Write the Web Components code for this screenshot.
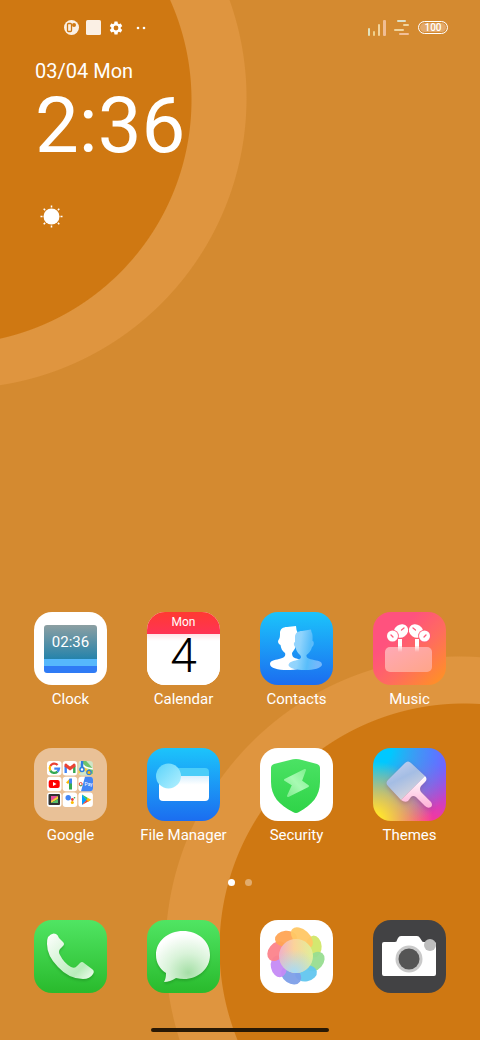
<!DOCTYPE html>
<html lang="en">
<head>
<meta charset="utf-8">
<meta name="viewport" content="width=device-width, initial-scale=1">
<title>Home</title>
<style>
  html, body {
    margin: 0;
    min-height: 100%;
  }
  body {
    font-family: Roboto, "Noto Sans", sans-serif;
    color: #fff;
  }
</style>
</head>
<body>

<phone-home>
  <status-bar slot="status"></status-bar>
  <clock-widget slot="widget" date="03/04 Mon" time="2:36"></clock-widget>

  <app-tile label="Clock"><clock-face time="02:36"></clock-face></app-tile>
  <app-tile label="Calendar"><calendar-face weekday="Mon" day="4"></calendar-face></app-tile>

  <app-tile label="Contacts" style="--tile: linear-gradient(#1cc4fb, #1b6df0)">
    <svg viewBox="0 0 73 73">
      <defs>
        <linearGradient id="person" x1="0" y1="0" x2="1" y2="0.2">
          <stop offset="0" stop-color="#9fd6fd"/>
          <stop offset="0.4" stop-color="#8fd3fc"/>
          <stop offset="0.7" stop-color="#58bdfa"/>
          <stop offset="1" stop-color="#74b8fb"/>
        </linearGradient>
      </defs>
      <path fill="#fff" d="M20 21C20 17 23 15 27 15L36 14L36.500 18C38 20 37.500 24 37.500 27C39 28 38 32 36 33C35.500 37 33 39 32 41C32 45 34 46 38 47C44 49 46 50 46 52C45 56 36 58 27 58C18 58 10 56 10 52C10 49 14 48 19 47C24 46 26 44 25 41C22 39 21 36 20.500 33C18 32 17.500 29 18.500 28C20 26 20 24 20 21Z"/>
      <path fill="url(#person)" d="M35 25C35 21 38 19 42 19L51 17.500L51.500 20C53 22 52.500 26 52.500 29C54.500 29 54 34 52 35C51 39 49 41 46.500 43C46 46 49 47 54 48C60 49 62 50 62 53C61 56 54 58 45 58C36 58 28.500 56 28.500 53C29 50 33 49 37 48C41 47 42 45 40 43C37 40 36 38 35.500 35C33.500 34 33.500 30 35 30Z"/>
    </svg>
  </app-tile>

  <app-tile label="Music" style="--tile: linear-gradient(135deg, #ff527e 30%, #ff6c5e 60%, #ff961d)">
    <svg viewBox="0 0 73 73">
      <defs>
        <linearGradient id="case" x1="0" y1="0" x2="1" y2="1">
          <stop offset="0" stop-color="#ffa9b7"/>
          <stop offset="1" stop-color="#ffa588"/>
        </linearGradient>
        <linearGradient id="stem" x1="0" y1="0" x2="0" y2="1">
          <stop offset="0.5" stop-color="#fff"/>
          <stop offset="1" stop-color="#fff" stop-opacity="0"/>
        </linearGradient>
      </defs>
      <rect x="12" y="35" width="47" height="25" rx="5" fill="url(#case)"/>
      <g id="bud">
        <path fill="url(#stem)" d="M25 27h4v13h-4z"/>
        <ellipse cx="28" cy="19" rx="7.500" ry="6.500" transform="rotate(-35 28 19)" fill="#fff"/>
        <circle cx="19.500" cy="24" r="6.300" fill="#ff5a7a"/>
        <circle cx="19.500" cy="24" r="5.500" fill="#fff"/>
        <path stroke="#ff5a7a" stroke-width="1.300" stroke-linecap="round" d="M28.500 18l2.500-2M18 23l2 2"/>
      </g>
      <use href="#bud" transform="matrix(-1 0 0 1 71 0)"/>
    </svg>
  </app-tile>

  <app-tile label="Google" style="--tile: #e9c197">
    <svg viewBox="0 0 73 73">
      <g fill="#fff">
        <rect x="13" y="13" width="14.500" height="14.500" rx="3"/>
        <rect x="28.700" y="13" width="14.500" height="14.500" rx="3"/>
        <rect x="44.400" y="13" width="14.500" height="14.500" rx="3" fill="#cfe5c8"/>
        <rect x="13" y="28.700" width="14.500" height="14.500" rx="3"/>
        <rect x="28.700" y="28.700" width="14.500" height="14.500" rx="3"/>
        <rect x="44.400" y="28.700" width="14.500" height="14.500" rx="3"/>
        <rect x="13" y="44.400" width="14.500" height="14.500" rx="3"/>
        <rect x="28.700" y="44.400" width="14.500" height="14.500" rx="3"/>
        <rect x="44.400" y="44.400" width="14.500" height="14.500" rx="3"/>
      </g>
      <g fill="none" stroke-width="2.300">
        <path stroke="#ea4335" d="M16.300 18A4.600 4.600 0 0 1 23.600 17"/>
        <path stroke="#fbbc04" d="M16.300 22.600A4.600 4.600 0 0 1 16.300 18"/>
        <path stroke="#34a853" d="M23.500 23.600A4.600 4.600 0 0 1 16.300 22.600"/>
        <path stroke="#4285f4" d="M20.300 20.600H25A4.800 4.800 0 0 1 23.400 23.700"/>
      </g>
      <path fill="#4285f4" d="M30.500 17.500l2.400 1.500v6h-2.400z"/>
      <path fill="#34a853" d="M41.500 17.500l-2.400 1.500v6h2.400z"/>
      <path fill="#ea4335" d="M30.500 16.500c1-1.500 2-1 2.800 0l2.700 2 2.700-2c.8-1 1.800-1.500 2.800 0v2l-5.500 4-5.500-4z"/>
      <clipPath id="map"><rect x="44.400" y="13" width="14.500" height="14.500" rx="3"/></clipPath>
      <g clip-path="url(#map)" fill="none">
        <path stroke="#6fc36b" stroke-width="4" d="M49 12c3 5 8 7 10 14"/>
        <path stroke="#f6cf45" stroke-width="3" d="M43 25l7-5 10 10"/>
        <path stroke="#fff" stroke-width="1.500" d="M46 13c2 6 7 7 13 8"/>
        <path stroke="#2d7de0" stroke-width="2.500" d="M48 13v7"/>
        <circle cx="48" cy="21.500" r="2" fill="#fff" stroke="#2d7de0" stroke-width="1.500"/>
        <circle cx="55" cy="24.500" r="2.200" fill="#fbbc04" stroke="#2d7de0" stroke-width="1.200"/>
      </g>
      <rect x="14.700" y="32" width="11" height="8" rx="2" fill="#f00"/>
      <path fill="#fff" d="M19 34l3.500 2-3.500 2z"/>
      <path fill="#fbbc04" d="M32 34.500l4-4 1.500 2-3.500 3.500z"/>
      <path fill="#4285f4" d="M35 31.500q0-1 1-1h2v6h-3z"/>
      <path fill="#34a853" d="M35 35.500h3v6h-3z"/>
      <path fill="#4285f4" d="M51 28.700h5a3 3 0 0 1 3 3v8.500a3 3 0 0 1-3 3h-9z"/>
      <circle cx="46.700" cy="36" r="1.500" fill="none" stroke="#ea4335"/>
      <path fill="none" stroke="#34a853" d="M45.400 37a1.500 1.500 0 0 0 2.800 0"/>
      <text x="50.500" y="38" font-size="5" fill="#fff">Pay</text>
      <rect x="14.500" y="46" width="11.500" height="11" rx="1" fill="#333"/>
      <path fill="#e94e9c" d="M17 48l7 0-7 6z"/>
      <path fill="#f4d13d" d="M24 48v3l-7 4v-2z"/>
      <path fill="#58bf6c" d="M24 51v4h-7z"/>
      <circle cx="34.200" cy="49.700" r="2.700" fill="#4285f4"/>
      <circle cx="38.400" cy="51.500" r="1.400" fill="#ea4335"/>
      <circle cx="38.300" cy="54.600" r="1.500" fill="#fbbc04"/>
      <circle cx="40.500" cy="49.700" r=".8" fill="#34a853"/>
      <path fill="#00a0ff" d="M48 46.500v10.500l5-5.300z"/>
      <path fill="#ea4335" d="M48 57l8-4.500-2.700-1.500z"/>
      <path fill="#34c759" d="M48 46.500l6 3.600-1.300 1.900z"/>
      <path fill="#fbbc04" d="M54 50l3.500 1.800-3.500 2-1.500-2z"/>
    </svg>
  </app-tile>

  <app-tile label="File Manager" style="--tile: linear-gradient(#1cc4fb, #1b6df0)">
    <svg viewBox="0 0 73 73">
      <defs>
        <linearGradient id="folder" x1="0" y1="0" x2="0" y2="1">
          <stop offset="0" stop-color="#d8f0fe"/>
          <stop offset="0.350" stop-color="#fff"/>
        </linearGradient>
        <linearGradient id="lens" x1="0" y1="0" x2="1" y2="1">
          <stop offset="0" stop-color="#5bd3fb"/>
          <stop offset="1" stop-color="#b4f0fe"/>
        </linearGradient>
      </defs>
      <path fill="#4bcdf8" d="M24 20h34a4 4 0 0 1 4 4v6H24z"/>
      <path fill="url(#folder)" d="M12 28h50v21a4 4 0 0 1-4 4H16a4 4 0 0 1-4-4z"/>
      <circle cx="21.500" cy="28" r="12.500" fill="url(#lens)"/>
    </svg>
  </app-tile>

  <app-tile label="Security">
    <svg viewBox="0 0 73 73">
      <defs>
        <linearGradient id="shield" x1="0" y1="0" x2="0" y2="1">
          <stop offset="0" stop-color="#4be264"/>
          <stop offset="1" stop-color="#2fd448"/>
        </linearGradient>
        <linearGradient id="bolt" x1="1" y1="0" x2="0" y2="1">
          <stop offset="0" stop-color="#7df08d"/>
          <stop offset="0.500" stop-color="#a8fab3"/>
          <stop offset="1" stop-color="#7beb8a"/>
        </linearGradient>
      </defs>
      <path fill="url(#shield)" d="M30 12Q36 10 42 12L57 16Q60 17 60 20V34C60 48 52 57 39 64Q36 66 33 64C19 57 11 48 11 34V20Q11 17 14 16Z"/>
      <path fill="url(#bolt)" stroke="url(#bolt)" stroke-width="2" stroke-linejoin="round" d="M45 22L25 32L33 37L28 48L48 38L41 33Z"/>
    </svg>
  </app-tile>

  <app-tile label="Themes" style="--tile: radial-gradient(circle at 0 100%, #ffe52e 8%, #ffe52e00 58%), radial-gradient(circle at 0 0, #00c8ff 18%, #00c8ff00 85%), radial-gradient(circle at 100% 5%, #8b4dff 15%, #8b4dff00 75%), #ff3694">
    <svg viewBox="0 0 73 73">
      <defs>
        <linearGradient id="bristle" x1="0" y1="0" x2="0.500" y2="1">
          <stop offset="0" stop-color="#c9d5f3"/>
          <stop offset="0.500" stop-color="#a4bde4"/>
          <stop offset="1" stop-color="#d8d5da"/>
        </linearGradient>
        <linearGradient id="handle" x1="0" y1="0" x2="0" y2="1">
          <stop offset="0" stop-color="#fff"/>
          <stop offset="1" stop-color="#ffb1d7"/>
        </linearGradient>
      </defs>
      <g style="filter: drop-shadow(0 2px 2px #a0307055)">
        <path fill="url(#bristle)" d="M15 32L32 15Q35 12 38 15L52 28L28 52L15 38Q12 35 15 32Z"/>
        <path fill="url(#handle)" d="M52 28Q55 31 52 34L48 38Q46 41 48 44L58 54Q60 57 58 59Q55 61 52 58L43 49Q40 47 38 49L35 53Q32 55 28 52Z"/>
      </g>
    </svg>
  </app-tile>

  <app-tile slot="dock" name="Phone" style="--tile: linear-gradient(#50e563, #29ba2c)">
    <svg viewBox="0 0 73 73">
      <defs>
        <linearGradient id="handset" x1="0" y1="0" x2="1" y2="1">
          <stop offset="0" stop-color="#fff"/>
          <stop offset="0.750" stop-color="#b9ecba"/>
          <stop offset="1" stop-color="#f4fff4"/>
        </linearGradient>
      </defs>
      <path style="filter: drop-shadow(0 2px 1px #18821b66)" fill="url(#handset)" d="M14 17Q18 12 22 14Q24 15 25 18L29 22Q31 24 29 26L26 29Q24 32 26 35Q30 43 37 47Q41 49 43 46L46 43Q48 41 50 43L58 49Q61 51 59 54Q56 59 49 59Q35 59 24 47Q13 36 13 24Q13 19 14 17Z"/>
    </svg>
  </app-tile>

  <app-tile slot="dock" name="Messages" style="--tile: linear-gradient(#50e563, #29ba2c)">
    <svg viewBox="0 0 73 73">
      <defs>
        <radialGradient id="bubble" cx="0.600" cy="0.820" r="0.850">
          <stop offset="0" stop-color="#a5dfa6"/>
          <stop offset="0.450" stop-color="#d9f3d9"/>
          <stop offset="0.900" stop-color="#fff"/>
        </radialGradient>
      </defs>
      <path style="filter: drop-shadow(0 2px 1px #18821b66)" fill="url(#bubble)" d="M36 11C51 11 63 21 63 35C63 49 51 59 37 59Q33 59 29 58Q23 62 17 62Q19 59 19 53C13 49 9 43 9 35C9 21 21 11 36 11Z"/>
    </svg>
  </app-tile>

  <app-tile slot="dock" name="Gallery">
    <svg viewBox="0 0 73 73">
      <defs>
        <radialGradient id="core-blue" cx="0.450" cy="1" r="0.700">
          <stop offset="0" stop-color="#a3dcfa"/>
          <stop offset="1" stop-color="#a3dcfa" stop-opacity="0"/>
        </radialGradient>
        <linearGradient id="core">
          <stop offset="0" stop-color="#efb0c9"/>
          <stop offset="0.450" stop-color="#fbd39a"/>
          <stop offset="1" stop-color="#dff09a"/>
        </linearGradient>
      </defs>
      <g fill-opacity="0.950">
        <ellipse cx="36" cy="16" rx="11" ry="8" fill="#d1e768" transform="rotate(62 36 36) rotate(25 36 16)"/>
        <ellipse cx="36" cy="16" rx="11" ry="8" fill="#98dd90" transform="rotate(106 36 36) rotate(25 36 16)"/>
        <ellipse cx="36" cy="16" rx="11" ry="8" fill="#62c6ef" transform="rotate(150 36 36) rotate(20 36 16)"/>
        <ellipse cx="36" cy="16" rx="11" ry="8" fill="#7d9fe8" transform="rotate(194 36 36) rotate(20 36 16)"/>
        <ellipse cx="36" cy="16" rx="11" ry="8" fill="#c58af6" transform="rotate(239 36 36) rotate(20 36 16)"/>
        <ellipse cx="36" cy="16" rx="11" ry="8" fill="#fc838b" transform="rotate(284 36 36) rotate(25 36 16)"/>
        <ellipse cx="36" cy="16" rx="11" ry="8" fill="#ffa454" transform="rotate(330 36 36) rotate(25 36 16)"/>
        <ellipse cx="36" cy="17" rx="13" ry="8" fill="#ffc765" transform="rotate(18 36 36) rotate(25 36 17)"/>
      </g>
      <circle cx="36" cy="36" r="17" fill="url(#core)"/>
      <circle cx="36" cy="36" r="17" fill="url(#core-blue)"/>
    </svg>
  </app-tile>

  <app-tile slot="dock" name="Camera" style="--tile: #424244">
    <svg viewBox="0 0 73 73">
      <path fill="#fff" d="M11 22H22Q24 22 24 20L25 18Q26 16 28 16H44Q46 16 47 18L49 21Q49 22 51 22H61Q63 22 63 24V54Q63 56 61 56H11Q9 56 9 54V24Q9 22 11 22Z"/>
      <circle cx="36" cy="39" r="13.500" fill="#c9c9c9"/>
      <circle cx="36" cy="39" r="10.500" fill="#555"/>
      <circle cx="57" cy="25" r="6" fill="#bdbdbd"/>
    </svg>
  </app-tile>
</phone-home>

<script>
class ShadowElement extends HTMLElement {
  constructor () {
    super()
    this.attachShadow({ mode: 'open' })
  }

  connectedCallback () {
    this.shadowRoot.innerHTML = this.render()
  }
}

customElements.define('phone-home', class PhoneHome extends ShadowElement {
  render () {
    return `<style>
      :host {
        --base: #d48a30;
        --ring: #df953f;
        --disc: #cf7812;
        display: flex;
        flex-direction: column;
        box-sizing: border-box;
        min-height: 100vh;
        padding-bottom: 8px;
        background:
          radial-gradient(circle at -53px 100px, var(--disc) 244px, transparent 245px),
          radial-gradient(circle at -44px 98px, var(--ring) 290px, transparent 291px),
          radial-gradient(circle at calc(100% - 16px) calc(100% - 92px), var(--disc) 244px, transparent 245px),
          radial-gradient(circle at calc(100% - 21px) calc(100% - 90px), var(--ring) 293px, transparent 294px),
          var(--base);
      }
      main, footer {
        display: grid;
        grid-template-columns: repeat(4, 1fr);
        row-gap: 39px;
        padding: 0 14px;
      }
      main {
        margin-top: auto;
      }
      .gesture {
        width: 37%;
        height: 4px;
        margin: 35px auto 0;
        border-radius: 2px;
        background: #281804;
      }
    </style>
    <slot name="status"></slot>
    <slot name="widget"></slot>
    <main><slot></slot></main>
    <page-dots count="2"></page-dots>
    <footer><slot name="dock"></slot></footer>
    <div class="gesture"></div>`
  }
})

customElements.define('status-bar', class StatusBar extends ShadowElement {
  render () {
    return `<style>
      :host {
        display: flex;
        justify-content: space-between;
        align-items: center;
        height: 55px;
        padding: 0 32px 0 64px;
      }
      div {
        display: flex;
        align-items: center;
        gap: 7px;
      }
      svg {
        display: block;
      }
      .battery {
        box-sizing: border-box;
        width: 30px;
        height: 13px;
        border: 1px solid #fff;
        border-radius: 7px;
        background: #e3a869;
        box-shadow: inset 0 0 0 1px #d48a30;
        font-size: 10px;
        font-weight: 500;
        line-height: 11px;
        text-align: center;
      }
      .signals {
        gap: 8px;
      }
      .signals svg {
        filter: blur(0.5px);
      }
    </style>
    <div>
      <svg width="15" height="15" viewBox="0 0 15 15">
        <circle cx="7.500" cy="7.500" r="7.500" fill="#fbf0e5"/>
        <rect x="3.500" y="3.500" width="4" height="8" rx="1" fill="none" stroke="#cf7812" stroke-width="1.300"/>
        <circle cx="10" cy="5" r="2" fill="#cf7812"/>
      </svg>
      <svg width="15" height="15" viewBox="0 0 15 15"><rect width="15" height="15" rx="1.500" fill="#fbf0e5"/></svg>
      <svg width="16" height="16" viewBox="0 0 24 24">
        <path fill="#fff" d="M19.140 12.940c.04-.3.060-.610.060-.940s-.02-.640-.07-.940l2.030-1.580a.5.500 0 0 0 .120-.610l-1.920-3.320a.5.500 0 0 0-.590-.220l-2.390.960a7 7 0 0 0-1.620-.940l-.360-2.540a.5.500 0 0 0-.480-.410h-3.840a.5.500 0 0 0-.470.410l-.360 2.540a7 7 0 0 0-1.620.940l-2.390-.960a.5.500 0 0 0-.590.220L2.740 8.870a.5.500 0 0 0 .120.610l2.030 1.580a6 6 0 0 0 0 1.880l-2.030 1.580a.5.500 0 0 0-.120.610l1.920 3.320c.120.220.370.290.590.220l2.390-.960c.5.380 1.030.7 1.620.940l.360 2.540c.05.240.240.410.480.410h3.840c.240 0 .440-.170.470-.410l.360-2.540a7 7 0 0 0 1.620-.940l2.390.960c.220.080.470 0 .590-.220l1.920-3.320a.5.500 0 0 0-.120-.610zM12 15.600a3.600 3.600 0 1 1 0-7.200 3.600 3.600 0 0 1 0 7.200z"/>
      </svg>
      <svg width="18" height="4" viewBox="0 0 18 4"><circle cx="7" cy="2" r="1.300" fill="#fff"/><circle cx="13" cy="2" r="1.300" fill="#fff"/></svg>
    </div>
    <div class="signals">
      <svg width="19" height="16" viewBox="0 0 19 16">
        <rect x="1" y="8" width="2" height="8" rx="1" fill="#e0e2bd"/>
        <rect x="6" y="11" width="2" height="5" rx="1" fill="#f0d08c"/>
        <rect x="11" y="4" width="2" height="12" rx="1" fill="#f3d49c"/>
        <rect x="16" width="3" height="16" rx="1" fill="#f0bd94"/>
      </svg>
      <svg width="16" height="16" viewBox="0 0 16 16">
        <rect x="3" width="9" height="2" rx="1" fill="#dde0c8"/>
        <rect x="9" y="4" width="6" height="2" rx="1" fill="#f0d49c"/>
        <rect y="9" width="10" height="2" rx="1" fill="#f0d49c"/>
        <rect x="5" y="13" width="10" height="2" rx="1" fill="#f2c09a"/>
      </svg>
      <span class="battery">100</span>
    </div>`
  }
})

customElements.define('clock-widget', class ClockWidget extends ShadowElement {
  render () {
    return `<style>
      :host {
        display: block;
        padding: 0 35px;
      }
      time {
        display: block;
      }
      .date {
        font-size: 20px;
        line-height: 32px;
      }
      .time {
        font-size: 78px;
        line-height: 78px;
      }
      svg {
        display: block;
        margin: 40px 5px 0;
      }
    </style>
    <time class="date">${this.getAttribute('date')}</time>
    <time class="time">${this.getAttribute('time')}</time>
    <svg width="23" height="23" viewBox="0 0 23 23">
      <circle cx="11.500" cy="11.500" r="8" fill="#fff"/>
      <path stroke="#fff" stroke-width="1.500" d="M11.500 .5v2M11.500 20.500v2M.5 11.500h2M20.500 11.500h2M3.700 3.700l1.400 1.400M17.900 17.900l1.400 1.400M3.700 19.300l1.400-1.400M17.900 5.100l1.400-1.400"/>
    </svg>`
  }
})

customElements.define('app-tile', class AppTile extends ShadowElement {
  render () {
    const label = this.getAttribute('label')
    const name = this.getAttribute('name') || label
    return `<style>
      :host {
        display: flex;
        justify-content: center;
      }
      button {
        display: flex;
        flex-direction: column;
        align-items: center;
        gap: 4px;
        padding: 0;
        border: 0;
        background: none;
        color: inherit;
        font: 15px/20px Roboto, "Noto Sans", sans-serif;
        white-space: nowrap;
        cursor: pointer;
      }
      .icon {
        display: grid;
        width: 73px;
        height: 73px;
        overflow: hidden;
        border-radius: 18px;
        background: var(--tile, #fff);
      }
    </style>
    <button type="button" aria-label="${name}">
      <span class="icon"><slot></slot></span>
      ${label ? `<span>${label}</span>` : ''}
    </button>`
  }
})

customElements.define('clock-face', class ClockFace extends ShadowElement {
  render () {
    return `<style>
      :host {
        display: grid;
        grid-template-rows: 34px 7px 7px;
        align-content: center;
        padding: 0 10px;
      }
      span {
        border-radius: 3px 3px 0 0;
        background: linear-gradient(#8c9fa2, #2583ab);
        color: #fff;
        font-size: 15px;
        line-height: 34px;
        text-align: center;
      }
      i {
        background: #56b8fc;
      }
      i + i {
        border-radius: 0 0 3px 3px;
        background: #2f7bf5;
      }
    </style>
    <span>${this.getAttribute('time')}</span><i></i><i></i>`
  }
})

customElements.define('calendar-face', class CalendarFace extends ShadowElement {
  render () {
    return `<style>
      :host {
        display: grid;
        grid-template-rows: 22px 1fr;
        text-align: center;
      }
      .weekday {
        background: linear-gradient(#ff3a32, #ff3355);
        color: #fff;
        font-size: 12px;
        line-height: 20px;
      }
      .day {
        background: linear-gradient(#ffe3e8, #fff 7px);
        color: #000;
        font-size: 48px;
        font-weight: 300;
        line-height: 44px;
      }
    </style>
    <span class="weekday">${this.getAttribute('weekday')}</span>
    <span class="day">${this.getAttribute('day')}</span>`
  }
})

customElements.define('page-dots', class PageDots extends ShadowElement {
  render () {
    const count = Number(this.getAttribute('count'))
    return `<style>
      :host {
        display: flex;
        justify-content: center;
        align-items: center;
        gap: 10px;
        height: 75px;
      }
      i {
        width: 7px;
        height: 7px;
        border-radius: 50%;
        background: #e2ac6d;
      }
      i:first-of-type {
        background: #fff;
      }
    </style>${'<i></i>'.repeat(count)}`
  }
})
</script>
</body>
</html>
